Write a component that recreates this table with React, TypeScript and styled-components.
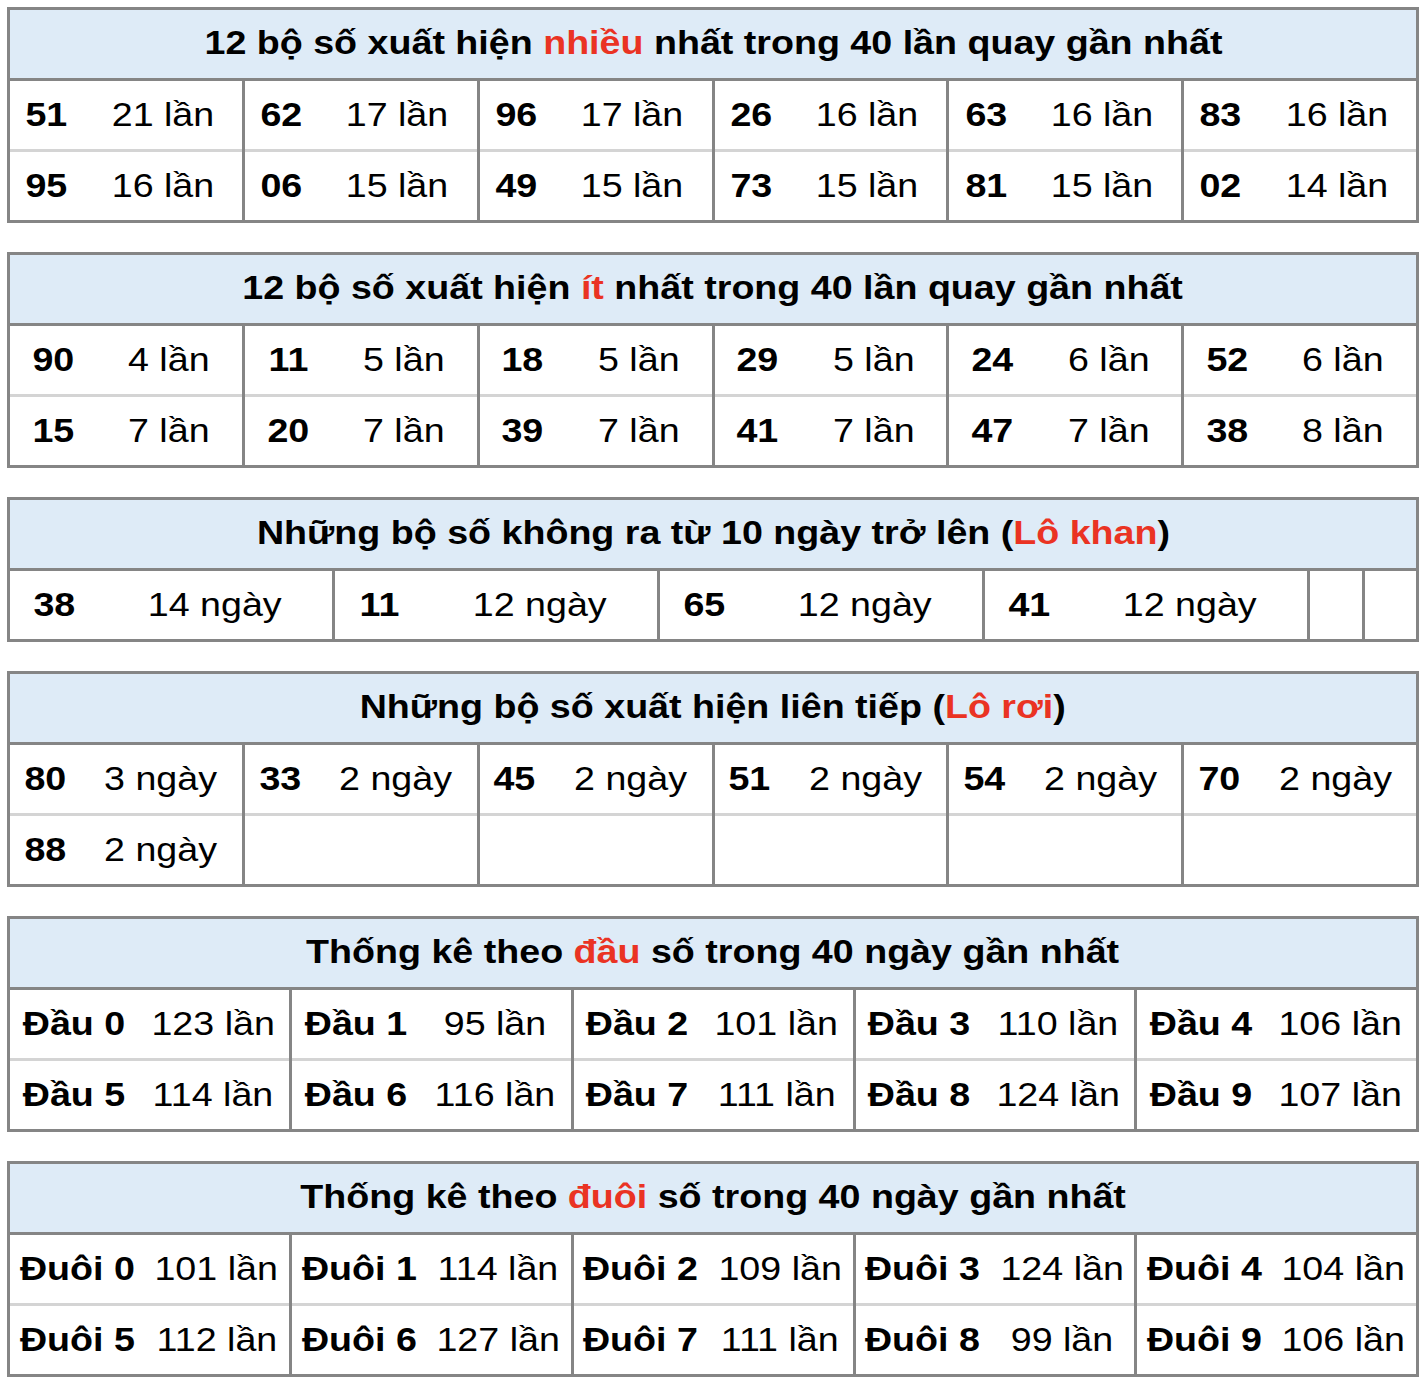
import React from "react";
import styled, { createGlobalStyle } from "styled-components";

const Global = createGlobalStyle`
  html, body { margin: 0; padding: 0; background: #ffffff; }
  body { font-family: "Liberation Sans", Arial, Helvetica, sans-serif; color: #000; }
`;

const Page = styled.div`
  padding: 7px 5px 8px 7px;
  display: flex;
  flex-direction: column;
  gap: 29px;
  width: 1412px;
`;

const Table = styled.section`
  border: 3px solid #858585;
  background: #fff;
`;

const Header = styled.h2`
  margin: 0;
  height: 68px;
  line-height: 66px;
  text-align: center;
  background: #deebf7;
  border-bottom: 3px solid #858585;
  font-size: 33px;
  font-weight: 700;
  white-space: nowrap;
`;

/* the reference type is set wide; stretch glyphs horizontally */
const Wide = styled.span`
  display: inline-block;
  transform: scaleX(1.14);
  transform-origin: center;
`;

const Red = styled.span`
  color: #ea3323;
`;

const Row = styled.div<{ $cols: string }>`
  display: grid;
  grid-template-columns: ${(p) => p.$cols};
`;

const Group = styled.div<{ $first: boolean }>`
  border-left: ${(p) => (p.$first ? "none" : "3px solid #858585")};
  min-width: 0;
`;

const Pair = styled.div<{ $numW: number; $top: boolean }>`
  display: grid;
  grid-template-columns: ${(p) => p.$numW}px 1fr;
  height: 68px;
  border-top: ${(p) => (p.$top ? "3px solid #d4d4d4" : "none")};
`;

const Cell = styled.div<{ $bold?: boolean }>`
  display: flex;
  align-items: center;
  justify-content: center;
  font-size: 33px;
  font-weight: ${(p) => (p.$bold ? 700 : 400)};
  white-space: nowrap;
`;

type Item = [string, string] | null;

interface SectionData {
  title: React.ReactNode;
  cols: string;
  numW: number;
  rows: Item[][];
}

const sections: SectionData[] = [
  {
    title: (
      <>
        12 bộ số xuất hiện <Red>nhiều</Red> nhất trong 40 lần quay gần nhất
      </>
    ),
    cols: "232px repeat(5, 1fr)",
    numW: 73,
    rows: [
      [["51", "21 lần"], ["62", "17 lần"], ["96", "17 lần"], ["26", "16 lần"], ["63", "16 lần"], ["83", "16 lần"]],
      [["95", "16 lần"], ["06", "15 lần"], ["49", "15 lần"], ["73", "15 lần"], ["81", "15 lần"], ["02", "14 lần"]],
    ],
  },
  {
    title: (
      <>
        12 bộ số xuất hiện <Red>ít</Red> nhất trong 40 lần quay gần nhất
      </>
    ),
    cols: "232px repeat(5, 1fr)",
    numW: 86,
    rows: [
      [["90", "4 lần"], ["11", "5 lần"], ["18", "5 lần"], ["29", "5 lần"], ["24", "6 lần"], ["52", "6 lần"]],
      [["15", "7 lần"], ["20", "7 lần"], ["39", "7 lần"], ["41", "7 lần"], ["47", "7 lần"], ["38", "8 lần"]],
    ],
  },
  {
    title: (
      <>
        Những bộ số không ra từ 10 ngày trở lên (<Red>Lô khan</Red>)
      </>
    ),
    cols: "322px 325px 325px 325px 1fr 1fr",
    numW: 88,
    rows: [[["38", "14 ngày"], ["11", "12 ngày"], ["65", "12 ngày"], ["41", "12 ngày"], null, null]],
  },
  {
    title: (
      <>
        Những bộ số xuất hiện liên tiếp (<Red>Lô rơi</Red>)
      </>
    ),
    cols: "232px repeat(5, 1fr)",
    numW: 70,
    rows: [
      [["80", "3 ngày"], ["33", "2 ngày"], ["45", "2 ngày"], ["51", "2 ngày"], ["54", "2 ngày"], ["70", "2 ngày"]],
      [["88", "2 ngày"], null, null, null, null, null],
    ],
  },
  {
    title: (
      <>
        Thống kê theo <Red>đầu</Red> số trong 40 ngày gần nhất
      </>
    ),
    cols: "279px repeat(4, 1fr)",
    numW: 127,
    rows: [
      [["Đầu 0", "123 lần"], ["Đầu 1", "95 lần"], ["Đầu 2", "101 lần"], ["Đầu 3", "110 lần"], ["Đầu 4", "106 lần"]],
      [["Đầu 5", "114 lần"], ["Đầu 6", "116 lần"], ["Đầu 7", "111 lần"], ["Đầu 8", "124 lần"], ["Đầu 9", "107 lần"]],
    ],
  },
  {
    title: (
      <>
        Thống kê theo <Red>đuôi</Red> số trong 40 ngày gần nhất
      </>
    ),
    cols: "279px repeat(4, 1fr)",
    numW: 134,
    rows: [
      [["Đuôi 0", "101 lần"], ["Đuôi 1", "114 lần"], ["Đuôi 2", "109 lần"], ["Đuôi 3", "124 lần"], ["Đuôi 4", "104 lần"]],
      [["Đuôi 5", "112 lần"], ["Đuôi 6", "127 lần"], ["Đuôi 7", "111 lần"], ["Đuôi 8", "99 lần"], ["Đuôi 9", "106 lần"]],
    ],
  },
];

function StatTable({ data }: { data: SectionData }) {
  return (
    <Table>
      <Header>
        <Wide>{data.title}</Wide>
      </Header>
      {data.rows.map((row, ri) => (
        <Row key={ri} $cols={data.cols}>
          {row.map((item, gi) => (
            <Group key={gi} $first={gi === 0}>
              <Pair $numW={data.numW} $top={ri > 0}>
                <Cell $bold>{item ? <Wide>{item[0]}</Wide> : null}</Cell>
                <Cell>{item ? <Wide>{item[1]}</Wide> : null}</Cell>
              </Pair>
            </Group>
          ))}
        </Row>
      ))}
    </Table>
  );
}

export default function App() {
  return (
    <>
      <Global />
      <Page>
        {sections.map((s, i) => (
          <StatTable key={i} data={s} />
        ))}
      </Page>
    </>
  );
}
